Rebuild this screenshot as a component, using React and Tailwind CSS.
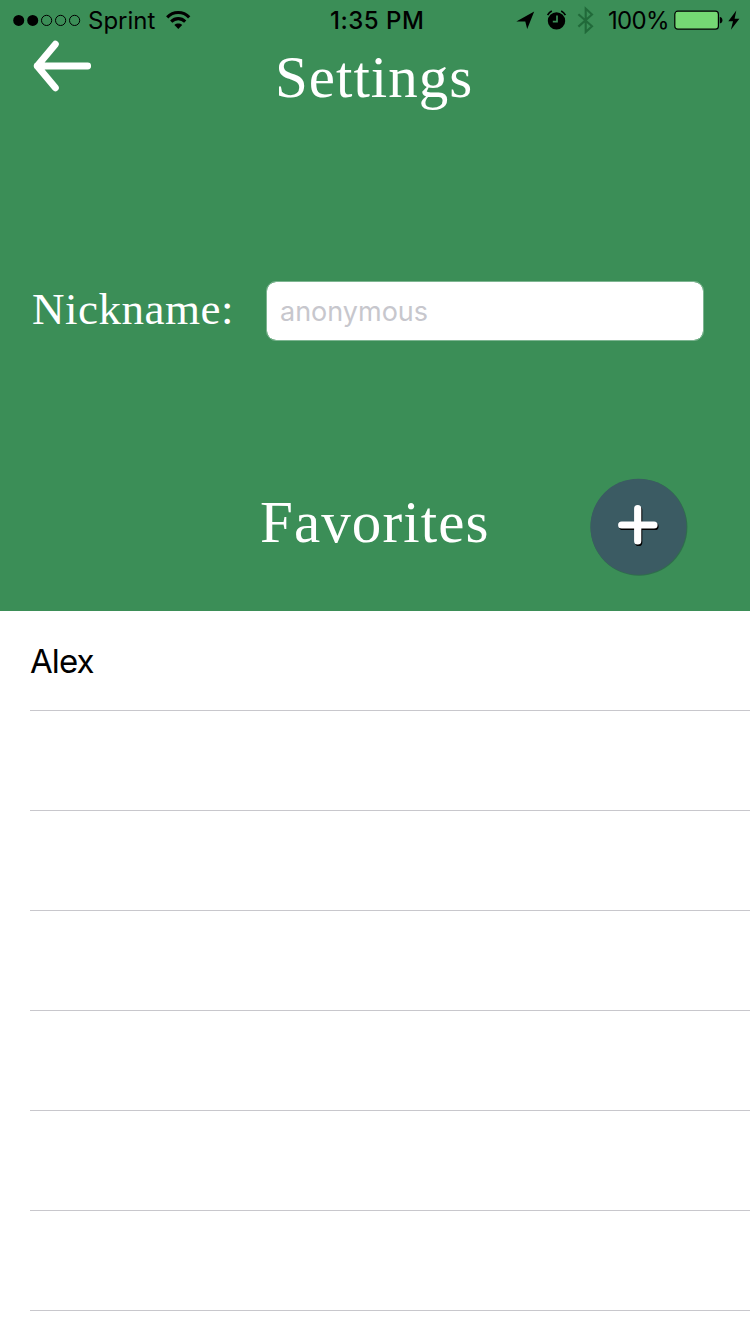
import React from "react";

const favorites = ["Alex", "", "", "", "", "", ""];

function StatusBar() {
  return (
    <div className="h-10 flex items-center text-black font-['Inter',sans-serif] text-[24px] leading-none">
      {/* Carrier and signal */}
      <div className="w-[330px] flex items-center pl-[13px]">
        <svg width="68" height="12" viewBox="0 0 68 12">
          <circle cx="5.7" cy="6.4" r="5.5" />
          <circle cx="19.7" cy="6.4" r="5.5" />
          <g fill="none" stroke="#000" strokeWidth="1">
            <circle cx="33.6" cy="6.4" r="5.1" />
            <circle cx="47.6" cy="6.4" r="5.1" />
            <circle cx="61.6" cy="6.4" r="5.1" />
          </g>
        </svg>
        <span className="ml-[7px] w-[77px] pt-[2px]">Sprint</span>
        <svg width="26" height="20" viewBox="0 0 26 20" fill="none" stroke="#000" strokeWidth="3.1">
          <path d="M2.2 7.4C8.2 0.9 18.2 0.9 24.2 7.4" />
          <path d="M6.2 11.6C10.2 7.6 16.2 7.6 20.2 11.6" />
          <path d="M9.4 14.9C11.6 13 15 13 17.2 14.9L13.3 19Z" fill="#000" stroke="none" />
        </svg>
      </div>

      <span className="w-[186px] pt-[2px] font-medium tracking-[0.5px]">1:35 PM</span>

      {/* System icons and battery */}
      <svg width="19" height="18" viewBox="0 0 19 18">
        <path d="M0.3 10.6L18.2 0.4L11.2 18L9.3 10.6Z" />
      </svg>
      <svg className="ml-[12px]" width="20" height="20" viewBox="0 0 20 20">
        <circle cx="9.5" cy="10.9" r="8.7" />
        <path d="M0.6 5.2A10.7 10.7 0 0 1 4.8 1.1M14.2 1.1A10.7 10.7 0 0 1 18.4 5.2" fill="none" stroke="#000" strokeWidth="1.7" />
        <path d="M10 5.6V11.6H5.8" fill="none" stroke="#3b8e57" strokeWidth="1.7" />
      </svg>
      <svg className="ml-[10px]" width="18" height="28" viewBox="0 0 18 28">
        <path d="M1.4 8.2L15 20.2L8.7 26V2.6L15 8.5L1.4 20.6" fill="none" stroke="#216a3a" strokeWidth="2.1" />
      </svg>
      <span className="ml-[13px] w-[66px] pt-[2px] tracking-[-0.7px]">100%</span>
      <svg width="50" height="20" viewBox="0 0 50 20">
        <rect x="0.8" y="1.2" width="43.6" height="18" rx="3" fill="#75d974" stroke="#000" strokeWidth="1.2" />
        <path d="M45.8 7Q48.4 7.4 48.4 10.2T45.8 13.4Z" />
      </svg>
      <svg className="ml-[4px]" width="12" height="20" viewBox="0 0 12 20">
        <path d="M8.3 0.6L0.3 11.2H5L2.9 19.7L11.4 8.7H6.6Z" />
      </svg>
    </div>
  );
}

export default function App() {
  return (
    <main className="w-[750px] h-[1334px] overflow-hidden bg-white">
      <section className="h-[611px] bg-[#3b8e57] text-white font-['Palatino','Palatino_Linotype','Liberation_Serif',serif]">
        <StatusBar />

        {/* Title row */}
        <header className="h-[85px] grid grid-cols-[275px_1fr]">
          <button aria-label="Back" className="ml-[33px] w-[59px] h-[52px]">
            <svg width="59" height="52" viewBox="0 0 59 52" fill="none" stroke="#fff" strokeWidth="6.8" strokeLinecap="round" strokeLinejoin="round">
              <path d="M22.4 4.2L4.2 26L22.4 47.8M4.2 26H54.7" />
            </svg>
          </button>
          <h1 className="pt-[5px] text-[59px] leading-[64px] tracking-[1px]">Settings</h1>
        </header>

        {/* Nickname field */}
        <div className="mt-[156px] h-[60px] flex items-center pl-[32px]">
          <label htmlFor="nickname" className="w-[234px] pb-[4px] text-[45px] leading-[58px] tracking-[0.5px]">
            Nickname:
          </label>
          <input
            id="nickname"
            placeholder="anonymous"
            className="w-[438px] h-[60px] rounded-[10px] border border-[#7db591] bg-white bg-clip-padding pl-[13px] font-['Inter',sans-serif] text-[27px] text-black placeholder:text-[#c7c7cd] placeholder:opacity-100"
          />
        </div>

        {/* Favorites heading */}
        <div className="mt-[137px] h-[99px] flex pl-[260px]">
          <h2 className="w-[330px] text-[59px] leading-[64px] pt-[12px] tracking-[1.1px]">Favorites</h2>
          <button aria-label="Add favorite" className="w-[98px] h-[98px]">
            <svg width="98" height="98" viewBox="0 0 98 98">
              <circle cx="49" cy="49.3" r="48.4" fill="#2f6e4c" />
              <circle cx="48.4" cy="48.7" r="48" fill="#3b5b63" />
              <g fill="none" strokeWidth="7.2" strokeLinecap="round">
                <path d="M48.7 32.2V64.4M32.7 48.4H65" stroke="#000" />
                <path d="M47.7 30.7V63M31.7 47H64" stroke="#fff" />
              </g>
            </svg>
          </button>
        </div>
      </section>

      <ul className="pl-[30px] font-['Inter',sans-serif] text-[33px] tracking-[-0.9px] text-black">
        {favorites.map((name, i) => (
          <li key={i} className="h-[100px] flex items-center pt-[2px] border-b border-[#c8c7cc]">
            {name}
          </li>
        ))}
      </ul>
    </main>
  );
}
